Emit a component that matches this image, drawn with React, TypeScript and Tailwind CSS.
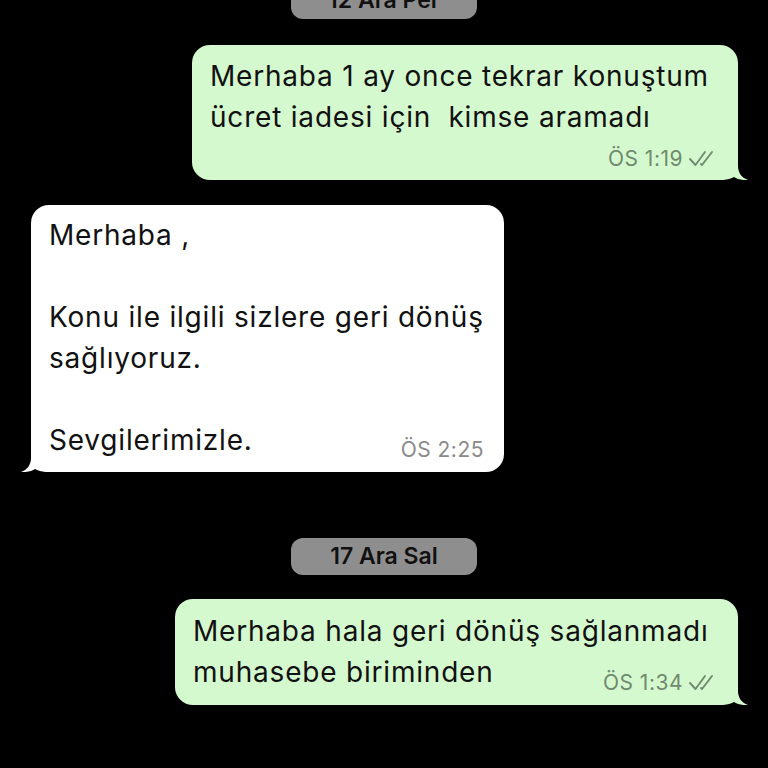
import React from "react";

function Ticks() {
  return (
    <svg width="30" height="17" viewBox="0 0 30 17" fill="none" className="ml-[5px]">
      <path d="M2 9 L7.5 15 L17 2" stroke="#6f8a6c" strokeWidth="1.9" strokeLinecap="round" strokeLinejoin="round" />
      <path d="M13 14 L14 15 L24 2" stroke="#6f8a6c" strokeWidth="1.9" strokeLinecap="round" strokeLinejoin="round" />
    </svg>
  );
}

function Tail({ color, side }: { color: string; side: "right" | "left" }) {
  return (
    <svg
      width="28"
      height="26"
      viewBox="0 0 28 26"
      className={
        side === "right"
          ? "absolute bottom-0 right-[-10px]"
          : "absolute bottom-0 left-[-10px] scale-x-[-1]"
      }
    >
      <path d="M0 0 H18 V12 C18 19 22 24 28 26 C22 26.5 17 25 14 23 C11 25 6 26 0 26 Z" fill={color} />
    </svg>
  );
}

function Pill({ text, className }: { text: string; className: string }) {
  return (
    <div
      className={
        "self-center w-[186px] h-[37px] rounded-[12px] bg-[#8e8e8e] flex items-center justify-center text-[23px] font-semibold text-[#111] " +
        className
      }
    >
      {text}
    </div>
  );
}

function SentTime({ time }: { time: string }) {
  return (
    <span className="flex items-center text-[21px] tracking-[0.5px] text-[#6f8a6c] leading-none">
      {time}
      <Ticks />
    </span>
  );
}

export default function App() {
  return (
    <div className="w-[768px] h-[768px] bg-black overflow-hidden flex flex-col font-['Inter',sans-serif] text-[28px] tracking-[0.8px] leading-[41px] text-[#111]">
      <Pill text="12 Ara Per" className="mt-[-18px] tracking-normal" />

      <div className="relative self-end mr-[30px] mt-[26px] w-[546px] rounded-[18px] bg-[#d5f9cf] pl-[18px] pr-[20px] pt-[11px] pb-[11px]">
        <div>Merhaba 1 ay once tekrar konuştum</div>
        <div className="whitespace-pre">ücret iadesi için  kimse aramadı</div>
        <div className="flex justify-end mt-[10px]">
          <SentTime time="ÖS 1:19" />
        </div>
        <Tail color="#d5f9cf" side="right" />
      </div>

      <div className="relative self-start ml-[31px] mt-[25px] w-[473px] rounded-[18px] bg-white pl-[18px] pr-[20px] pt-[10px] pb-[11px]">
        <div>Merhaba ,</div>
        <div>&nbsp;</div>
        <div>Konu ile ilgili sizlere geri dönüş</div>
        <div>sağlıyoruz.</div>
        <div>&nbsp;</div>
        <div className="flex justify-between items-end">
          <span>Sevgilerimizle.</span>
          <span className="text-[21px] tracking-[0.5px] text-[#8a8a8a] leading-none mb-[1px]">ÖS 2:25</span>
        </div>
        <Tail color="#ffffff" side="left" />
      </div>

      <Pill text="17 Ara Sal" className="mt-[66px] tracking-normal" />

      <div className="relative self-end mr-[30px] mt-[24px] w-[563px] rounded-[18px] bg-[#d5f9cf] pl-[18px] pr-[20px] pt-[12px] pb-[12px]">
        <div>Merhaba hala geri dönüş sağlanmadı</div>
        <div className="flex justify-between items-end">
          <span>muhasebe biriminden</span>
          <span className="mb-[0px]">
            <SentTime time="ÖS 1:34" />
          </span>
        </div>
        <Tail color="#d5f9cf" side="right" />
      </div>
    </div>
  );
}
